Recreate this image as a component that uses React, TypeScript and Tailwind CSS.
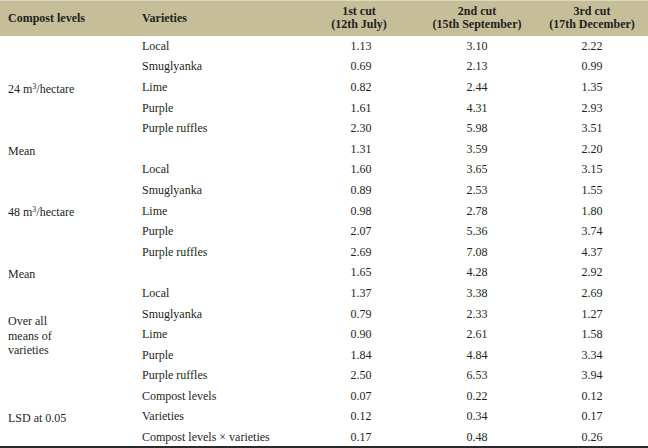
import React from "react";

type Row = { level?: React.ReactNode; span?: number; variety: string; a: string; b: string; c: string };

const rows: Row[] = [
  { level: <>24 m<sup className="text-[8px]">3</sup>/hectare</>, span: 5, variety: "Local", a: "1.13", b: "3.10", c: "2.22" },
  { variety: "Smuglyanka", a: "0.69", b: "2.13", c: "0.99" },
  { variety: "Lime", a: "0.82", b: "2.44", c: "1.35" },
  { variety: "Purple", a: "1.61", b: "4.31", c: "2.93" },
  { variety: "Purple ruffles", a: "2.30", b: "5.98", c: "3.51" },
  { level: "Mean", span: 1, variety: "", a: "1.31", b: "3.59", c: "2.20" },
  { level: <>48 m<sup className="text-[8px]">3</sup>/hectare</>, span: 5, variety: "Local", a: "1.60", b: "3.65", c: "3.15" },
  { variety: "Smuglyanka", a: "0.89", b: "2.53", c: "1.55" },
  { variety: "Lime", a: "0.98", b: "2.78", c: "1.80" },
  { variety: "Purple", a: "2.07", b: "5.36", c: "3.74" },
  { variety: "Purple ruffles", a: "2.69", b: "7.08", c: "4.37" },
  { level: "Mean", span: 1, variety: "", a: "1.65", b: "4.28", c: "2.92" },
  { level: <>Over all<br />means of<br />varieties</>, span: 5, variety: "Local", a: "1.37", b: "3.38", c: "2.69" },
  { variety: "Smuglyanka", a: "0.79", b: "2.33", c: "1.27" },
  { variety: "Lime", a: "0.90", b: "2.61", c: "1.58" },
  { variety: "Purple", a: "1.84", b: "4.84", c: "3.34" },
  { variety: "Purple ruffles", a: "2.50", b: "6.53", c: "3.94" },
  { level: "LSD at 0.05", span: 3, variety: "Compost levels", a: "0.07", b: "0.22", c: "0.12" },
  { variety: "Varieties", a: "0.12", b: "0.34", c: "0.17" },
  { variety: "Compost levels × varieties", a: "0.17", b: "0.48", c: "0.26" },
];

export default function App() {
  return (
    <div className="w-[648px] h-[448px] bg-white overflow-hidden font-[family-name:Liberation_Serif,serif] text-[12px] text-[#231f20]">
      <table className="w-[648px] border-collapse table-fixed border-b-2 border-[#2a2a2a] font-[family-name:Liberation_Serif,serif] text-[12px] text-[#231f20]">
        <colgroup>
          <col className="w-[134px]" />
          <col className="w-[166px]" />
          <col className="w-[118px]" />
          <col className="w-[118px]" />
          <col className="w-[112px]" />
        </colgroup>
        <thead>
          <tr className="h-[35px] bg-[#c5be98] border-t border-[#ddd8c4] leading-[13.5px]">
            <th className="text-left pl-2 font-bold">Compost levels</th>
            <th className="text-left pl-2 font-bold">Varieties</th>
            <th className="text-center font-bold">1st cut<br />(12th July)</th>
            <th className="text-center font-bold">2nd cut<br />(15th September)</th>
            <th className="text-center font-bold">3rd cut<br />(17th December)</th>
          </tr>
        </thead>
        <tbody>
          {rows.map((r, i) => (
            <tr key={i} className="h-[20.6px]">
              {r.level !== undefined && (
                <td rowSpan={r.span} className="pl-2 align-middle leading-[14.5px] pt-1">
                  {r.level}
                </td>
              )}
              <td className="pl-2">{r.variety}</td>
              <td className="text-center pl-1">{r.a}</td>
              <td className="text-center">{r.b}</td>
              <td className="text-center">{r.c}</td>
            </tr>
          ))}
        </tbody>
      </table>
    </div>
  );
}
